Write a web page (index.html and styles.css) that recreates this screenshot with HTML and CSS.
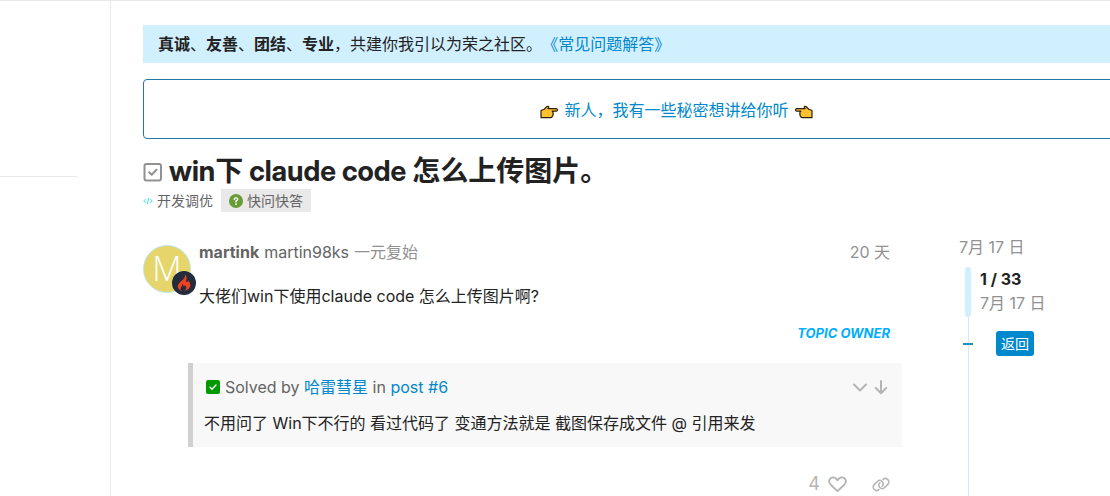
FILE: index.html
```
<!DOCTYPE html>
<html lang="zh-CN">
  <head>
    <meta charset="UTF-8" />
    <meta name="viewport" content="width=device-width, initial-scale=1.0" />
    <title>win下 claude code 怎么上传图片。</title>
    <link rel="stylesheet" href="styles.css" />
  </head>
  <body>
    <div class="page">
      <aside class="sidebar">
        <hr class="sidebar-divider" />
      </aside>

      <main class="main">
        <div class="notice">
          <strong>真诚</strong>、<strong>友善</strong>、<strong>团结</strong>、<strong>专业</strong>，共建你我引以为荣之社区。<a href="#">《常见问题解答》</a>
        </div>

        <div class="banner">
          <svg class="hand" viewBox="0 0 18 14" aria-hidden="true">
            <path d="M1 5.5 4.2 4.2 7 1.5Q8.3.8 8.8 2L8 3.6h8.3q1.2.2 1.2 1.3t-1.2 1.3h-4.1q1.2.7.7 1.7.7.8 0 1.8.3 1-.6 1.6 0 1.4-1.6 1.4H1z" fill="#fdc02f" stroke="#2d2013" stroke-width="1.2" stroke-linejoin="round" />
          </svg>
          <a href="#">新人，我有一些秘密想讲给你听</a>
          <svg class="hand hand-left" viewBox="0 0 18 14" aria-hidden="true">
            <path d="M1 5.5 4.2 4.2 7 1.5Q8.3.8 8.8 2L8 3.6h8.3q1.2.2 1.2 1.3t-1.2 1.3h-4.1q1.2.7.7 1.7.7.8 0 1.8.3 1-.6 1.6 0 1.4-1.6 1.4H1z" fill="#fdc02f" stroke="#2d2013" stroke-width="1.2" stroke-linejoin="round" />
          </svg>
        </div>

        <header class="topic-header">
          <h1 class="topic-title">
            <svg class="title-check" viewBox="0 0 20 20" aria-hidden="true">
              <rect x="1.5" y="2" width="16.5" height="16.5" rx="2" />
              <path d="m6.2 10.3 2.5 2.5 4.8-5" />
            </svg>
            <span>win下 claude code 怎么上传图片。</span>
          </h1>
          <div class="topic-meta">
            <a class="category" href="#">
              <svg class="code-icon" viewBox="0 0 11 10" aria-hidden="true">
                <path d="M3 2.8.8 5 3 7.2M8 2.8 10.2 5 8 7.2M6.3 1.6 4.7 8.4" />
              </svg>
              开发调优
            </a>
            <a class="tag" href="#">
              <svg class="question-icon" viewBox="0 0 14 14" aria-hidden="true">
                <circle cx="7" cy="7" r="7" fill="#669d34" />
                <path d="M5.2 5.4Q5.3 3.9 7 3.9t1.8 1.4Q8.8 6.2 7 7v1" fill="none" stroke="#fff" stroke-width="1.4" stroke-linecap="round" />
                <circle cx="7" cy="10.2" r=".9" fill="#fff" />
              </svg>
              快问快答
            </a>
          </div>
        </header>

        <div class="topic-body">
          <article class="post">
            <div class="avatar">
              <span>M</span>
              <svg class="flair" viewBox="0 0 24 24" aria-hidden="true">
                <circle cx="12" cy="12" r="12" fill="#242b3a" />
                <path d="M12.8 3.5C13.5 6.4 11.7 7.7 9.4 10 7 12.3 5 14.3 6.1 17q.9 2.2 3.7 3.1-2.2-2.1-.5-4.4 1-1.2 1-2.8 1.6 1 1.4 2.8 1.2-.5 1.1-1.8 2.4 2.5.9 4.6-.4.7-1.2 1.3 4.5-.6 5.7-4.2c.8-2.9-.9-4.8-2.3-6.3q.2 1.6-1 1.9-1.3 0-.6-2.3c.7-2.6.4-4-1.5-5.4z" fill="#ee4323" />
              </svg>
            </div>
            <div class="post-main">
              <div class="post-meta">
                <a class="username" href="#">martink</a>
                <a class="full-name" href="#">martin98ks</a>
                <span class="user-title">一元复始</span>
                <a class="post-date" href="#">20 天</a>
              </div>
              <p class="post-text">大佬们win下使用claude code 怎么上传图片啊?</p>
              <div class="topic-owner">TOPIC OWNER</div>

              <aside class="solved">
                <div class="solved-title">
                  <svg class="solved-check" viewBox="0 0 14 14" aria-hidden="true">
                    <rect width="14" height="14" rx="2" fill="#090" />
                    <path d="m4 7.2 2 2 4-4.2" fill="none" stroke="#fff" stroke-width="1.4" stroke-linecap="round" stroke-linejoin="round" />
                  </svg>
                  <span>Solved by <a href="#">哈雷彗星</a> in <a href="#">post #6</a></span>
                  <div class="solved-controls">
                    <button type="button" aria-label="展开">
                      <svg viewBox="0 0 16 16"><path d="m2 5.5 6 6 6-6" /></svg>
                    </button>
                    <button type="button" aria-label="跳转到帖子">
                      <svg viewBox="0 0 16 16"><path d="M8 2v12M2.8 9 8 14.2 13.2 9" /></svg>
                    </button>
                  </div>
                </div>
                <p class="solved-text">不用问了 Win下不行的 看过代码了 变通方法就是 截图保存成文件 @ 引用来发</p>
              </aside>

              <div class="post-actions">
                <button class="likes" type="button">
                  4
                  <svg class="heart" viewBox="0 0 20 18" aria-label="赞">
                    <path d="M10 16 2.8 9.2C.6 7 .7 4.1 2.5 2.6c2-1.7 4.7-1.3 6.2.5L10 4.6l1.3-1.5c1.5-1.8 4.2-2.2 6.2-.5 1.8 1.5 1.9 4.4-.3 6.6z" />
                  </svg>
                </button>
                <button type="button" aria-label="复制链接">
                  <svg class="link" viewBox="0 0 640 512">
                    <path id="link-half" d="M563 250c47-47 47-122 0-169-45-45-116-47-163-6l-6 5M563 250 450 364c-47 47-122 47-169 0-45-45-47-116-6-163l5-6" />
                    <use href="#link-half" transform="rotate(180 320 256)" />
                  </svg>
                </button>
              </div>
            </div>
          </article>

          <nav class="timeline">
            <a class="start-date" href="#">7月 17 日</a>
            <div class="scroll-area">
              <div class="track">
                <div class="handle"></div>
                <div class="last-read"></div>
              </div>
              <div class="timeline-info">
                <strong>1 / 33</strong>
                <span>7月 17 日</span>
                <button class="back" type="button">返回</button>
              </div>
            </div>
          </nav>
        </div>
      </main>
    </div>
  </body>
</html>
```
FILE: styles.css
```
* {
  box-sizing: border-box;
}
body {
  margin: 0;
  font-family: Inter, "Noto Sans CJK SC", sans-serif;
  font-size: 16px;
  line-height: 24px;
  text-spacing-trim: space-all;
  color: #222;
  background-color: #fff;
}
a {
  color: #0088cc;
  text-decoration: none;
}
button {
  padding: 0;
  border: none;
  background: none;
  font: inherit;
  color: inherit;
  cursor: pointer;
}
svg {
  display: block;
  flex: none;
}
p {
  margin: 0;
}
.page {
  display: flex;
  height: 100vh;
  overflow: hidden;
  border-top: 1px solid #e9e9e9;
}
.sidebar {
  flex: none;
  width: 111px;
  padding: 175px 33px 0 0;
  border-right: 1px solid #e9e9e9;
}
.sidebar-divider {
  margin: 0;
  border: none;
  border-top: 1px solid #e9e9e9;
}
.main {
  flex: 1;
  min-width: 0;
  padding: 24px 0 0 32px;
}

/* The notices run on past the right edge of the window */
.notice,
.banner {
  margin-right: -100px;
}
.notice {
  padding: 7px 15px;
  background-color: #d1f0ff;
}
.banner {
  display: flex;
  align-items: center;
  justify-content: center;
  gap: 6px;
  height: 60px;
  margin-top: 16px;
  padding-top: 2px;
  border: 1px solid #1f7aa6;
  border-radius: 4px;
}
.hand {
  width: 18px;
  height: 14px;
  margin-top: 4px;
}
.hand-left {
  transform: scaleX(-1);
}

.topic-header {
  margin-top: 15px;
}
.topic-title {
  display: flex;
  align-items: center;
  gap: 6px;
  margin: 0;
  font-family: "Inter Display", Inter, "Noto Sans CJK SC", sans-serif;
  font-size: 28px;
  line-height: 35px;
  font-weight: 700;
}
.title-check {
  width: 20px;
  height: 20px;
  fill: none;
  stroke: #919191;
  stroke-width: 2;
  stroke-linecap: round;
  stroke-linejoin: round;
}
.topic-meta {
  display: flex;
  gap: 8px;
  font-size: 14px;
  line-height: 23px;
}
.topic-meta a {
  display: flex;
  align-items: center;
  gap: 4px;
  color: #646464;
}
.code-icon {
  width: 10px;
  height: 10px;
  fill: none;
  stroke: #25e2f0;
}
.topic-meta .tag {
  padding: 0 8px;
  background-color: #e9e9e9;
}
.question-icon {
  width: 14px;
  height: 14px;
}

.topic-body {
  display: flex;
  gap: 57px;
  margin-top: 23px;
}
.post {
  display: flex;
  flex: 1;
  gap: 8px;
  min-width: 0;
  padding: 5px 12px 0 0;
}
.avatar {
  position: relative;
  flex: none;
  width: 48px;
  height: 48px;
  margin-top: 5px;
  border: 1px solid #bfe6e6;
  border-radius: 50%;
  background-color: #e5d56b;
  color: #fff;
  font-family: "Open Sans", sans-serif;
  font-size: 34px;
  font-weight: 300;
  line-height: 44px;
  text-align: center;
}
.flair {
  position: absolute;
  right: -6px;
  bottom: -3px;
  width: 24px;
  height: 24px;
}
.post-main {
  flex: 1;
  min-width: 0;
}
.post-meta {
  display: flex;
  gap: 5px;
}
.username {
  color: #646464;
  font-weight: 700;
}
.full-name {
  color: #646464;
}
.user-title,
.post-date {
  color: #919191;
}
.post-date {
  margin-left: auto;
}
.post-text {
  margin-top: 20px;
}
.topic-owner {
  margin-top: 13px;
  color: #00aeff;
  font-size: 13px;
  font-style: italic;
  font-weight: 700;
  text-align: right;
}
.solved {
  margin: 18px -12px 0 -11px;
  padding: 12px 13px 12px 11px;
  border-left: 5px solid #d0d0d0;
  background-color: #f8f8f8;
}
.solved-title {
  display: flex;
  align-items: center;
  gap: 5px;
  padding-left: 2px;
  color: #646464;
}
.solved-check {
  width: 14px;
  height: 14px;
}
.solved-controls {
  display: flex;
  gap: 5px;
  margin-left: auto;
}
.solved-controls svg {
  width: 16px;
  height: 16px;
}
.solved-controls svg,
.heart {
  fill: none;
  stroke: #b5b5b5;
  stroke-width: 2;
  stroke-linecap: round;
  stroke-linejoin: round;
}
.solved-text {
  margin-top: 12px;
}
.post-actions {
  display: flex;
  align-items: center;
  justify-content: flex-end;
  gap: 25px;
  margin-top: 25px;
  color: #b5b5b5;
}
.likes {
  display: flex;
  align-items: center;
  gap: 8px;
  font-size: 18px;
}
.heart {
  width: 19px;
  height: 17px;
}
.link {
  width: 18px;
  height: 15px;
  fill: none;
  stroke: #b5b5b5;
  stroke-width: 56;
  stroke-linecap: round;
}

.timeline {
  display: flex;
  flex: none;
  flex-direction: column;
  width: 151px;
}
.start-date,
.timeline-info span {
  color: #919191;
}
.scroll-area {
  display: flex;
  flex: 1;
  gap: 7px;
  margin-top: 8px;
  padding-left: 4px;
}
.track {
  display: flex;
  flex-direction: column;
  align-items: center;
  width: 10px;
  min-height: 260px;
  background: linear-gradient(#d1e8f5, #d1e8f5) center / 1px 100% no-repeat;
}
.handle {
  width: 6px;
  height: 50px;
  border-radius: 4px;
  background-color: #d1f0ff;
}
.last-read {
  width: 10px;
  height: 2px;
  margin-top: 26px;
  background-color: #1f8fc0;
}
.timeline-info {
  display: flex;
  flex-direction: column;
  align-items: flex-start;
}
.back {
  margin: 16px 0 0 16px;
  padding: 0 5px;
  border-radius: 3px;
  background-color: #0088cc;
  color: #fff;
  font-size: 14px;
  line-height: 25px;
}
```
